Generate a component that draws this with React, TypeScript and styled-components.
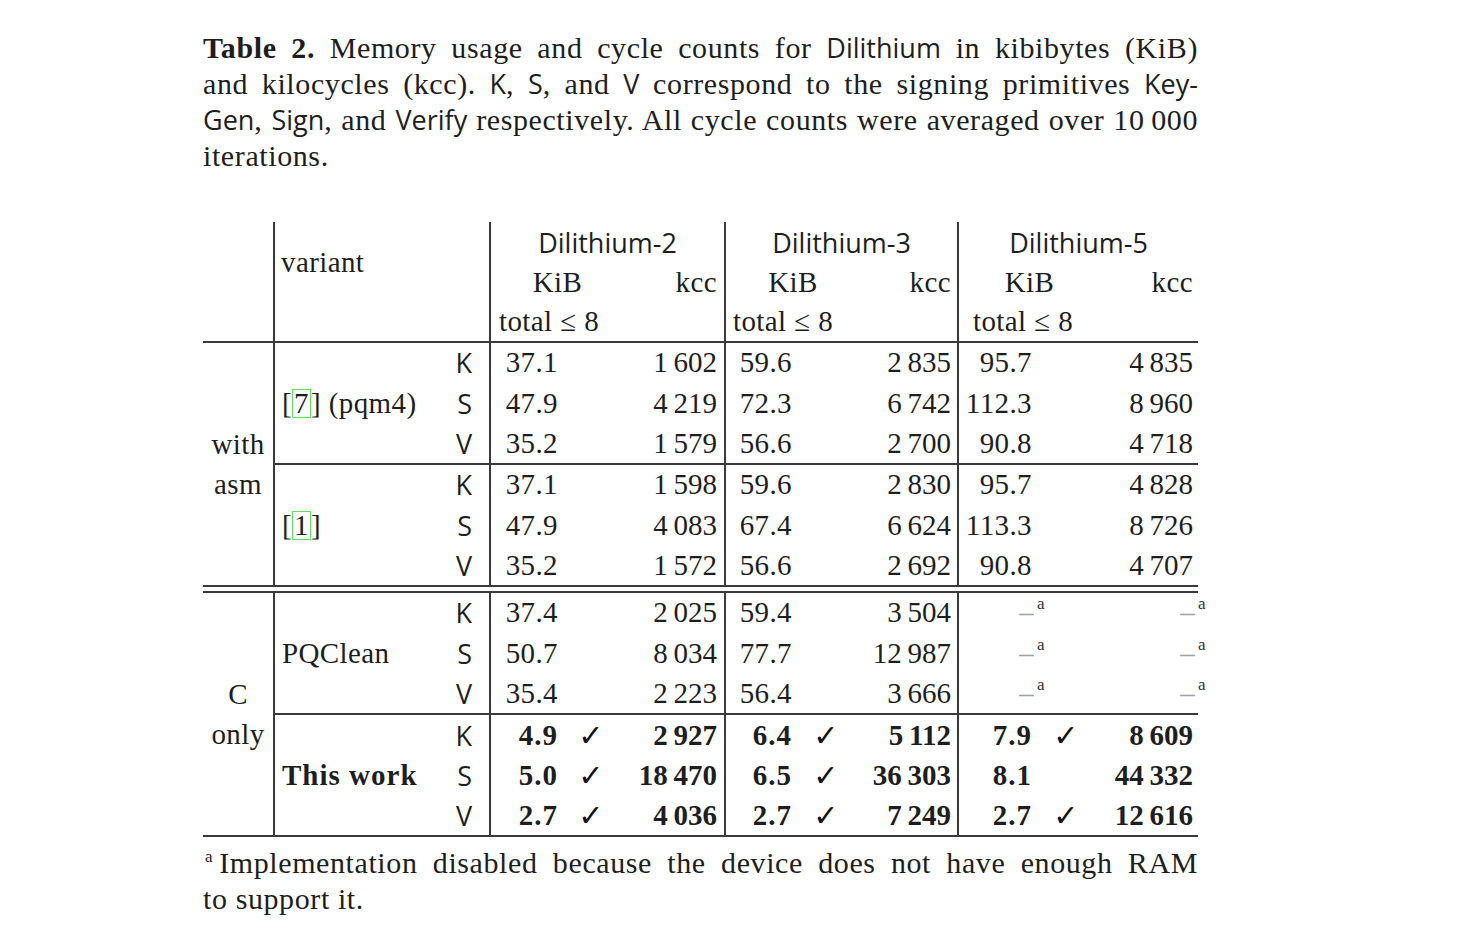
import React from 'react'
import styled, { createGlobalStyle } from 'styled-components'

type Cell = { kib: string; ok?: boolean; kcc: number } | null
type Prim = 'K' | 'S' | 'V'
type Row = { prim: Prim; cells: Cell[] }
type Group = { label: React.ReactNode; bold?: boolean; rows: Row[] }
type Section = { label: [string, string]; groups: Group[] }

const RULE = '2px solid #3a3a3a'
const THIN = '\u202f'

const sets = [
  { name: 'Dilithium-2', totalPad: 8, kccPad: 7, w: [80, 42, 113] },
  { name: 'Dilithium-3', totalPad: 7, kccPad: 6, w: [79, 44, 110] },
  { name: 'Dilithium-5', totalPad: 14, kccPad: 5, w: [86, 44, 110] },
]

const GlobalStyle = createGlobalStyle`
  html, body {
    margin: 0;
    padding: 0;
    background: #ffffff;
  }
  body {
    font-family: 'Liberation Serif', 'Times New Roman', serif;
    color: #1e1e1e;
  }
`

const Figure = styled.div`
  width: 995px;
  margin-left: 203px;
  padding-top: 30px;
`

const Caption = styled.div`
  font-size: 30px;
  line-height: 36px;
  letter-spacing: 0.6px;
  margin-bottom: 48px;

  b {
    font-weight: 700;
  }
`

const Line = styled.div<{ $last?: boolean }>`
  white-space: nowrap;
  text-align: ${(p) => (p.$last ? 'left' : 'justify')};
  text-align-last: ${(p) => (p.$last ? 'left' : 'justify')};
`

const Sf = styled.span`
  font-family: 'Open Sans', 'DejaVu Sans', sans-serif;
  font-size: 0.9em;
  letter-spacing: 0;
`

const Cite = styled.span`
  display: inline-block;
  border: 1.5px solid #5ee35e;
  line-height: 27px;
  padding: 0 1px;
`

const Table = styled.table`
  width: 995px;
  border-collapse: collapse;
  table-layout: fixed;
  font-size: 29px;
  letter-spacing: 0.4px;

  td,
  th {
    padding: 0;
    font-weight: 400;
    white-space: nowrap;
  }
`

const Col = styled.col<{ $w: number }>`
  width: ${(p) => p.$w}px;
`

const HeadRow = styled.tr<{ $rule?: boolean }>`
  height: 40px;
  border-bottom: ${(p) => (p.$rule ? RULE : 'none')};
`

const DataRow = styled.tr<{ $rule?: boolean }>`
  height: 40.7px;
  border-bottom: ${(p) => (p.$rule ? RULE : 'none')};
`

const Spacer = styled.tr`
  height: 4px;
  border-bottom: ${RULE};

  td {
    height: 4px;
  }
`

const Corner = styled.th`
  border-right: ${RULE};
`

const VariantHead = styled.th`
  text-align: left;
  vertical-align: middle;
  padding-left: 6px !important;
  border-right: ${RULE};
`

const VariantBlank = styled.th`
  border-right: ${RULE};
`

const SetHead = styled.th<{ $edge?: boolean }>`
  font-family: 'Open Sans', 'DejaVu Sans', sans-serif;
  font-size: 27px;
  letter-spacing: 0;
  text-align: center;
  border-right: ${(p) => (p.$edge ? RULE : 'none')};
`

const UnitHead = styled.th`
  text-align: center;
  padding-left: 12px !important;
`

const KccHead = styled.th<{ $pad: number; $edge?: boolean }>`
  text-align: right;
  padding-right: ${(p) => p.$pad}px !important;
  border-right: ${(p) => (p.$edge ? RULE : 'none')};
`

const TotalHead = styled.th<{ $pad: number }>`
  text-align: left;
  padding-left: ${(p) => p.$pad}px !important;
`

const SectionCell = styled.td`
  text-align: center;
  vertical-align: middle;
  line-height: 40px;
  border-right: ${RULE};
`

const VariantCell = styled.td<{ $bold?: boolean }>`
  text-align: left;
  vertical-align: middle;
  padding-left: 7px !important;
  font-weight: ${(p) => (p.$bold ? 700 : 400)} !important;
  letter-spacing: ${(p) => (p.$bold ? '1px' : '0.4px')};
`

const PrimCell = styled.td`
  font-family: 'Open Sans', 'DejaVu Sans', sans-serif;
  font-size: 27px;
  letter-spacing: 0;
  text-align: right;
  padding-right: 17px !important;
  border-right: ${RULE};
`

const ValueCell = styled.td<{ $bold?: boolean }>`
  text-align: right;
  padding-right: 12px !important;
  font-weight: ${(p) => (p.$bold ? 700 : 400)} !important;
  letter-spacing: ${(p) => (p.$bold ? '1px' : '0.4px')};
`

const CheckCell = styled.td`
  font-family: 'DejaVu Sans', sans-serif;
  font-size: 30px;
  color: #111;
  text-align: center;
`

const KccCell = styled.td<{ $pad: number; $edge?: boolean; $bold?: boolean }>`
  text-align: right;
  padding-right: ${(p) => p.$pad}px !important;
  border-right: ${(p) => (p.$edge ? RULE : 'none')};
  font-weight: ${(p) => (p.$bold ? 700 : 400)} !important;
  letter-spacing: ${(p) => (p.$bold ? '1px' : '0.4px')};
`

const Dash = styled.span`
  color: #a0a0a0;
`

const Note = styled.sup`
  font-size: 17px;
  line-height: 0;
  vertical-align: 13px;
  margin-left: 3px;
  margin-right: -13px;
  color: #333;
`

const Footnote = styled.div`
  font-size: 30px;
  line-height: 36px;
  letter-spacing: 0.6px;
  margin-top: 8px;
`

const Mark = styled.sup`
  font-size: 17px;
  line-height: 0;
  vertical-align: 11px;
  margin-right: 6px;
  margin-left: 2px;
`

// group thousands with a thin space, like siunitx does
const fmt = (n: number) => {
  const s = String(n)
  if (s.length < 4) return s
  return s.slice(0, s.length - 3) + THIN + s.slice(s.length - 3)
}

const c = (kib: string, kcc: number, ok?: boolean): Cell => ({ kib, kcc, ok })

const sections: Section[] = [
  {
    label: ['with', 'asm'],
    groups: [
      {
        label: (
          <>
            [<Cite>7</Cite>] (pqm4)
          </>
        ),
        rows: [
          { prim: 'K', cells: [c('37.1', 1602), c('59.6', 2835), c('95.7', 4835)] },
          { prim: 'S', cells: [c('47.9', 4219), c('72.3', 6742), c('112.3', 8960)] },
          { prim: 'V', cells: [c('35.2', 1579), c('56.6', 2700), c('90.8', 4718)] },
        ],
      },
      {
        label: (
          <>
            [<Cite>1</Cite>]
          </>
        ),
        rows: [
          { prim: 'K', cells: [c('37.1', 1598), c('59.6', 2830), c('95.7', 4828)] },
          { prim: 'S', cells: [c('47.9', 4083), c('67.4', 6624), c('113.3', 8726)] },
          { prim: 'V', cells: [c('35.2', 1572), c('56.6', 2692), c('90.8', 4707)] },
        ],
      },
    ],
  },
  {
    label: ['C', 'only'],
    groups: [
      {
        label: 'PQClean',
        rows: [
          { prim: 'K', cells: [c('37.4', 2025), c('59.4', 3504), null] },
          { prim: 'S', cells: [c('50.7', 8034), c('77.7', 12987), null] },
          { prim: 'V', cells: [c('35.4', 2223), c('56.4', 3666), null] },
        ],
      },
      {
        label: 'This work',
        bold: true,
        rows: [
          { prim: 'K', cells: [c('4.9', 2927, true), c('6.4', 5112, true), c('7.9', 8609, true)] },
          { prim: 'S', cells: [c('5.0', 18470, true), c('6.5', 36303, true), c('8.1', 44332)] },
          { prim: 'V', cells: [c('2.7', 4036, true), c('2.7', 7249, true), c('2.7', 12616, true)] },
        ],
      },
    ],
  },
]

const App: React.FC = () => (
  <>
    <GlobalStyle />
    <Figure>
      <Caption>
        <Line>
          <b>Table 2.</b> Memory usage and cycle counts for <Sf>Dilithium</Sf> in kibibytes (KiB)
        </Line>
        <Line>
          and kilocycles (kcc). <Sf>K</Sf>, <Sf>S</Sf>, and <Sf>V</Sf> correspond to the signing primitives{' '}
          <Sf>Key-</Sf>
        </Line>
        <Line>
          <Sf>Gen</Sf>, <Sf>Sign</Sf>, and <Sf>Verify</Sf> respectively. All cycle counts were averaged over 10{THIN}000
        </Line>
        <Line $last>iterations.</Line>
      </Caption>

      <Table>
        <colgroup>
          <Col $w={71} />
          <Col $w={174} />
          <Col $w={42} />
          {sets.map((s) => s.w.map((w, i) => <Col key={s.name + i} $w={w} />))}
        </colgroup>
        <thead>
          <HeadRow>
            <Corner rowSpan={3} />
            <VariantHead colSpan={2} rowSpan={2}>
              variant
            </VariantHead>
            {sets.map((s, i) => (
              <SetHead key={s.name} colSpan={3} $edge={i < sets.length - 1}>
                {s.name}
              </SetHead>
            ))}
          </HeadRow>
          <HeadRow>
            {sets.map((s, i) => (
              <React.Fragment key={s.name}>
                <UnitHead colSpan={2}>KiB</UnitHead>
                <KccHead $pad={s.kccPad} $edge={i < sets.length - 1}>
                  kcc
                </KccHead>
              </React.Fragment>
            ))}
          </HeadRow>
          <HeadRow $rule>
            <VariantBlank colSpan={2} />
            {sets.map((s, i) => (
              <React.Fragment key={s.name}>
                <TotalHead colSpan={2} $pad={s.totalPad}>
                  total ≤ 8
                </TotalHead>
                <KccHead $pad={s.kccPad} $edge={i < sets.length - 1} />
              </React.Fragment>
            ))}
          </HeadRow>
        </thead>
        <tbody>
          {sections.map((sec, si) => {
            const span = sec.groups.reduce((n, g) => n + g.rows.length, 0)
            return (
              <React.Fragment key={sec.label.join(' ')}>
                {si > 0 && (
                  <Spacer>
                    <td colSpan={12} />
                  </Spacer>
                )}
                {sec.groups.map((g, gi) =>
                  g.rows.map((r, ri) => (
                    <DataRow key={`${gi}-${r.prim}`} $rule={ri === g.rows.length - 1}>
                      {gi === 0 && ri === 0 && (
                        <SectionCell rowSpan={span}>
                          {sec.label[0]}
                          <br />
                          {sec.label[1]}
                        </SectionCell>
                      )}
                      {ri === 0 && (
                        <VariantCell rowSpan={g.rows.length} $bold={g.bold}>
                          {g.label}
                        </VariantCell>
                      )}
                      <PrimCell>{r.prim}</PrimCell>
                      {r.cells.map((cell, di) => {
                        const s = sets[di]
                        const edge = di < sets.length - 1
                        if (!cell) {
                          return (
                            <React.Fragment key={s.name}>
                              <ValueCell>
                                <Dash>–</Dash>
                                <Note>a</Note>
                              </ValueCell>
                              <CheckCell />
                              <KccCell $pad={s.kccPad} $edge={edge}>
                                <Dash>–</Dash>
                                <Note>a</Note>
                              </KccCell>
                            </React.Fragment>
                          )
                        }
                        return (
                          <React.Fragment key={s.name}>
                            <ValueCell $bold={g.bold}>{cell.kib}</ValueCell>
                            <CheckCell>{cell.ok ? '✓' : ''}</CheckCell>
                            <KccCell $pad={s.kccPad} $edge={edge} $bold={g.bold}>
                              {fmt(cell.kcc)}
                            </KccCell>
                          </React.Fragment>
                        )
                      })}
                    </DataRow>
                  )),
                )}
              </React.Fragment>
            )
          })}
        </tbody>
      </Table>

      <Footnote>
        <Line>
          <Mark>a</Mark>Implementation disabled because the device does not have enough RAM
        </Line>
        <Line $last>to support it.</Line>
      </Footnote>
    </Figure>
  </>
)

export default App
